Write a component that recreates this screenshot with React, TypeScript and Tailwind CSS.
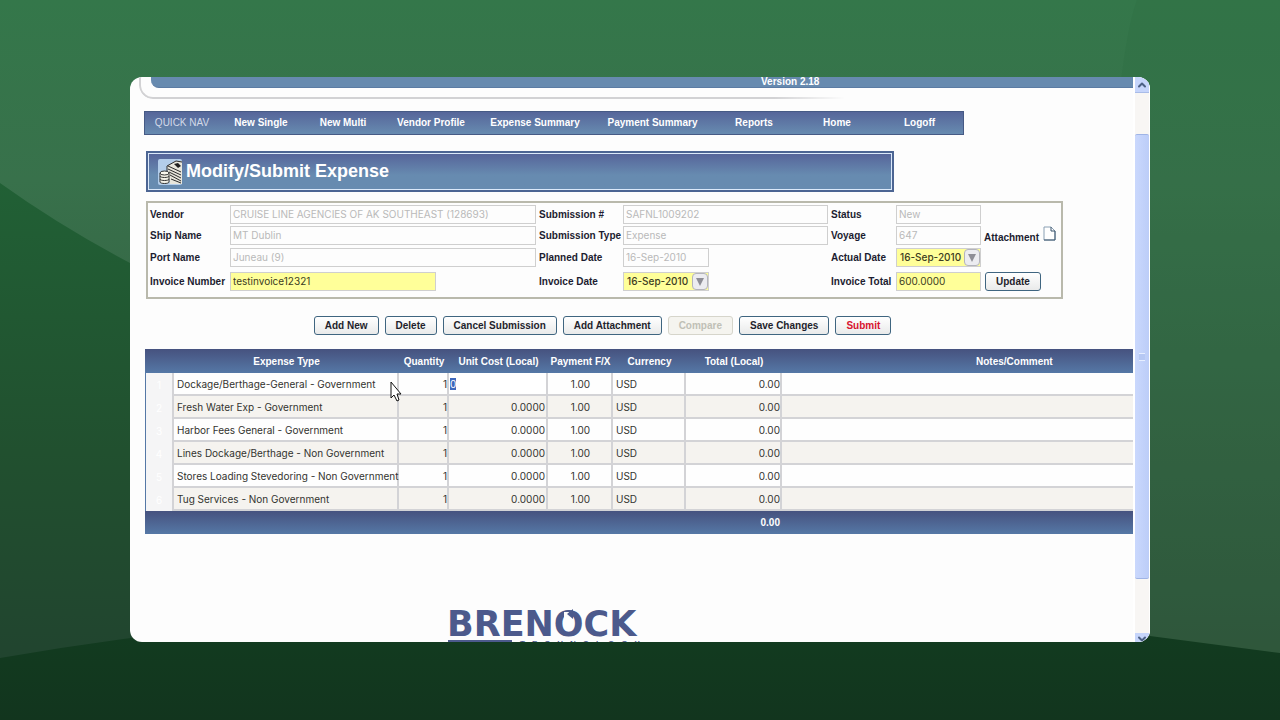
import { useEffect, useRef } from "react";
import { ChevronDown, ChevronUp } from "lucide-react";

const navItems = [
  { label: "New Single", width: "w-[84px]" },
  { label: "New Multi", width: "w-20" },
  { label: "Vendor Profile", width: "w-24" },
  { label: "Expense Summary", width: "w-28" },
  { label: "Payment Summary", width: "w-[123px]" },
  { label: "Reports", width: "w-20" },
  { label: "Home", width: "w-[86px]" },
  { label: "Logoff", width: "w-[79px]" },
];

const expenses = [
  "Dockage/Berthage-General - Government",
  "Fresh Water Exp - Government",
  "Harbor Fees General - Government",
  "Lines Dockage/Berthage - Non Government",
  "Stores Loading Stevedoring - Non Government",
  "Tug Services - Non Government",
];

const actions = ["Add New", "Delete", "Cancel Submission", "Add Attachment", "Compare", "Save Changes", "Submit"];

const bodyFont = "font-['Inter','Liberation_Sans',sans-serif]";

interface FieldProps {
  id: string;
  label: string;
  value: string;
  width?: string;
  kind?: "locked" | "editable" | "date";
}

function Field({ id, label, value, width = "w-full", kind = "locked" }: FieldProps) {
  const locked = kind === "locked";
  return (
    <>
      <label htmlFor={id} className="flex h-[19px] items-center font-bold whitespace-nowrap text-[#1c1c30]">
        {label}
      </label>
      <div
        className={`flex h-[19px] border border-[#cfcfcf] ${width} ${locked ? "bg-[#fdfdfd]" : "bg-[#ffff99]"}`}
      >
        <input
          id={id}
          defaultValue={value}
          disabled={locked}
          className={`w-full min-w-0 bg-transparent pb-[2px] outline-none ${bodyFont} ${
            locked ? "px-[2px] text-[#b9b9b9]" : kind === "date" ? "pl-[3px] font-medium text-[#3c3c22]" : "px-[2px] text-[#3c3c22]"
          }`}
        />
        {kind === "date" && (
          <button
            aria-label={`Pick ${label}`}
            className="flex w-4 shrink-0 items-center justify-center rounded-[4px] border border-[#b4b4bc] bg-[#ececf0]"
          >
            <svg viewBox="0 0 8 8" className="h-2 w-2" fill="#8e8e96">
              <path d="M0 0h8L4 8z" />
            </svg>
          </button>
        )}
      </div>
    </>
  );
}

function ActionButton({ label }: { label: string }) {
  const disabled = label === "Compare";
  return (
    <button
      disabled={disabled}
      className={`h-[19px] rounded-[3px] border px-[10px] font-bold whitespace-nowrap ${
        disabled
          ? "border-[#d6d5cb] bg-[#f5f4ef] text-[#c0c0b6]"
          : "border-[#3f6580] bg-linear-to-b from-white to-[#e9eaea]"
      } ${label === "Submit" ? "text-[#d8122f]" : disabled ? "" : "text-[#1f1f2c]"}`}
    >
      {label}
    </button>
  );
}

function ExpenseIcon() {
  return (
    <svg viewBox="0 0 24 26" className="h-[26px] w-6" fill="none">
      <rect width="24" height="26" rx="2" fill="#b3cdea" />
      <path d="M9 7 18 2h6v23H12z" fill="#e8e6dc" />
      <path d="M9 7 18 2l6 1M10 7l13 6M10 10l13 6M11 13l12 6M12 16l11 6M13 20l10 4M9 7v5" stroke="#2b2b2b" />
      <path d="m16 5 4-1 3 3-3 2z" fill="#1f1f1f" />
      <path d="M2 14v9c0 2 9 2 9 0v-9" fill="#f3f1e6" stroke="#333" />
      <ellipse cx="6.500" cy="14" rx="4.500" ry="2" fill="#faf8ee" stroke="#333" />
      <path d="M2 17c0 2 9 2 9 0M2 20c0 2 9 2 9 0" stroke="#333" />
    </svg>
  );
}

function Backdrop() {
  return (
    <svg
      viewBox="0 0 1280 720"
      preserveAspectRatio="none"
      className="absolute inset-0 -z-10 h-full w-full"
      aria-hidden="true"
    >
      <defs>
        <linearGradient id="base" x1="0" y1="0" x2="0" y2="1">
          <stop offset="0" stopColor="#34774a" />
          <stop offset="0.25" stopColor="#38714b" />
          <stop offset="0.9" stopColor="#30503a" />
        </linearGradient>
        <linearGradient id="hill" x1="0" y1="0" x2="0" y2="1">
          <stop offset="0" stopColor="#216035" />
          <stop offset="0.5" stopColor="#21502f" />
          <stop offset="0.9" stopColor="#21442f" />
        </linearGradient>
        <linearGradient id="floor" x1="0" y1="0" x2="0" y2="1">
          <stop offset="0" stopColor="#123d20" />
          <stop offset="1" stopColor="#12351e" />
        </linearGradient>
      </defs>
      <path d="M0 0h1280v720H0z" fill="url(#base)" />
      <path d="M1137 0h143v720h-180Q1100 100 1137 0z" fill="#2b6b40" fillOpacity="0.25" />
      <path d="M0 183Q60 226 130 263 400 440 640 720H0z" fill="url(#hill)" />
      <path d="M0 658Q500 570 1150 636L1280 653V720H0z" fill="url(#floor)" />
    </svg>
  );
}

function ScrollBar() {
  return (
    <div className="flex w-[17px] shrink-0 flex-col border-r border-l-2 border-white bg-[#f8f6f4]">
      <button aria-label="Scroll up" className="flex h-4 items-center justify-center border-b border-[#a9bce8] bg-[#c6d5fb]">
        <ChevronUp className="h-3 w-3 text-[#4d6185]" strokeWidth={4} />
      </button>
      <div className="flex-[41]" />
      <div className="flex flex-[447] items-center justify-center rounded-[2px] border-y border-[#9fb4e6] bg-linear-to-r from-[#cad8fd] to-[#bccdf8]">
        <span className="h-2 w-[6px] border-y border-[#e6eeff] bg-[#b6c8f4]" />
      </div>
      <div className="flex-[54]" />
      <button aria-label="Scroll down" className="flex h-[9px] items-start justify-center overflow-hidden bg-[#c6d5fb]">
        <ChevronDown className="h-3 w-3 shrink-0 text-[#4d6185]" strokeWidth={4} />
      </button>
    </div>
  );
}

function ExpenseTable() {
  const unitCost = useRef<HTMLInputElement>(null);

  useEffect(() => {
    unitCost.current?.focus();
    unitCost.current?.select();
  }, []);

  const cell = "border-r-2 border-b-2 border-[#d3d3d6]";

  return (
    <table className="mt-[14px] ml-[15px] w-[calc(100%-15px)] table-fixed border-separate border-spacing-0 whitespace-nowrap">
      <colgroup>
        <col className="w-[29px]" />
        <col className="w-[225px]" />
        <col className="w-[50px]" />
        <col className="w-[99px]" />
        <col className="w-[65px]" />
        <col className="w-[73px]" />
        <col className="w-24" />
        <col />
      </colgroup>
      <thead>
        <tr className="h-6 bg-linear-to-b from-[#46527f] to-[#5578a6] text-white">
          <th />
          <th className="pt-px">Expense Type</th>
          <th className="pt-px">Quantity</th>
          <th className="pt-px">Unit Cost (Local)</th>
          <th className="pt-px">Payment F/X</th>
          <th className="pt-px">Currency</th>
          <th className="pt-px">Total (Local)</th>
          <th className="pt-px pl-[194px] text-left">Notes/Comment</th>
        </tr>
      </thead>
      <tbody className={`${bodyFont} text-[#33332f]`}>
        {expenses.map((name, i) => (
          <tr key={name} className="h-[23px] bg-[#fefefe] even:bg-[#f5f3ef]">
            <td className="border-r-2 border-l border-r-[#d3d3d6] border-l-[#5578a6] bg-[#f5f5f6] text-center text-white">
              {i + 1}
            </td>
            <td className={`${cell} pl-[3px]`}>{name}</td>
            <td className={`${cell} text-right`}>1</td>
            <td className={`${cell} text-right`}>
              {i === 0 ? (
                <input
                  ref={unitCost}
                  aria-label="Unit Cost (Local)"
                  defaultValue="0"
                  className="block h-[21px] w-full bg-white px-px outline-none selection:bg-[#3f68bb] selection:text-white"
                />
              ) : (
                <span className="pr-px">0.0000</span>
              )}
            </td>
            <td className={`${cell} pl-[2px] text-center`}>1.00</td>
            <td className={`${cell} pl-[3px]`}>USD</td>
            <td className={`${cell} text-right`}>0.00</td>
            <td className="border-b-2 border-[#d3d3d6]" />
          </tr>
        ))}
      </tbody>
      <tfoot>
        <tr className="h-[23px] bg-linear-to-b from-[#46527f] to-[#5578a6] font-bold text-white">
          <td colSpan={6} />
          <td className="pr-[2px] text-right">0.00</td>
          <td />
        </tr>
      </tfoot>
    </table>
  );
}

export default function App() {
  return (
    <div className="relative isolate flex h-screen px-[130px] pt-[77px] pb-[78px] font-['Liberation_Sans',Arial,sans-serif] text-[10px]/[14px]">
      <Backdrop />

      <div className="flex min-w-0 flex-1 overflow-hidden rounded-[12px] bg-[#fdfdfd]">
        <main className="min-w-0 flex-1 overflow-hidden">
          {/* Banner */}
          <header className="ml-[9px] grid">
            <div className="col-start-1 row-start-1 h-[22px] w-[706px] rounded-bl-[14px] border-b-2 border-l-2 border-[#d2d2d4] mask-r-from-90%" />
            <div className="col-start-1 row-start-1 ml-3 h-[11px] rounded-bl-[8px] border-b border-[#5b7ba3] bg-[#678aaf] pl-[610px] text-[10px]/[9px] font-bold text-white">
              Version 2.18
            </div>
          </header>

          {/* Quick nav */}
          <nav className="mt-3 ml-[14px] flex h-6 w-[820px] items-center border border-[#465a85] bg-linear-to-b from-[#56669a] to-[#678bb0] pr-[2px] text-center whitespace-nowrap text-white">
            <span className="w-[74px] text-[#d3dae8]">QUICK NAV</span>
            {navItems.map((item) => (
              <a key={item.label} href="#" className={`font-bold ${item.width}`}>
                {item.label}
              </a>
            ))}
          </nav>

          {/* Page title */}
          <div className="mt-4 ml-4 w-[748px] border-2 border-[#4c6593] bg-[#dbe9fa] p-px">
            <div className="flex h-[35px] items-center gap-1 bg-linear-to-b from-[#56659a] to-[#678bb0] to-60% pl-[9px]">
              <ExpenseIcon />
              <h1 className="pb-px text-lg font-bold text-white">Modify/Submit Expense</h1>
            </div>
          </div>

          {/* Submission details */}
          <form className="mt-[9px] ml-4 grid w-[917px] grid-cols-[77px_306px_81px_205px_62px_85px_1fr] grid-rows-[19px_20px_22px_19px] items-start gap-x-[3px] gap-y-[2px] border-2 border-[#b9b9ac] px-[2px] pt-[2px] pb-[6px]">
            <Field id="vendor" label="Vendor" value="CRUISE LINE AGENCIES OF AK SOUTHEAST (128693)" />
            <Field id="submission" label="Submission #" value="SAFNL1009202" />
            <Field id="status" label="Status" value="New" />
            <span />

            <Field id="ship" label="Ship Name" value="MT Dublin" />
            <Field id="type" label="Submission Type" value="Expense" />
            <Field id="voyage" label="Voyage" value="647" />
            <div className="flex items-end gap-1 font-bold text-[#1c1c30]">
              <span className="-mb-1">Attachment</span>
              <svg viewBox="0 0 13 15" className="h-[15px] w-[13px]" fill="#fff">
                <path d="M1 1h7l4 4v9H1z" stroke="#8aa0b4" />
                <path d="M8 1v4h4v9H1" stroke="#3b546c" fill="none" />
              </svg>
            </div>

            <Field id="port" label="Port Name" value="Juneau (9)" />
            <Field id="planned" label="Planned Date" value="16-Sep-2010" width="w-[86px]" />
            <Field id="actual" label="Actual Date" value="16-Sep-2010" kind="date" />
            <span />

            <Field id="invoice" label="Invoice Number" value="testinvoice12321" width="w-[206px]" kind="editable" />
            <Field id="invoice-date" label="Invoice Date" value="16-Sep-2010" width="w-[86px]" kind="date" />
            <Field id="total" label="Invoice Total" value="600.0000" kind="editable" />
            <div className="flex pl-px">
              <ActionButton label="Update" />
            </div>
          </form>

          <div className="mt-[17px] ml-4 flex w-[913px] justify-center gap-[6px]">
            {actions.map((label) => (
              <ActionButton key={label} label={label} />
            ))}
          </div>

          <ExpenseTable />

          {/* Company logo */}
          <footer className="mt-[76px] ml-[317px] w-[193px] text-[#4c5a8c]">
            <p className="font-['DejaVu_Sans',sans-serif] text-[35px]/[28px] font-bold">
              BREN
              <span className="relative">
                O
                <svg viewBox="0 0 12 12" className="absolute top-[5px] left-[10px] h-3 w-3" aria-hidden="true">
                  <path d="M0 3h5v9H0z" fill="#fdfdfd" />
                  <path d="M3 5 9 0v10z" fill="#4c5a8c" />
                </svg>
              </span>
              CK
            </p>
            <div className="mt-[2px] flex items-start gap-2 pl-px">
              <span className="h-[3px] w-16 bg-[#4c5a8c]" />
              <span className="flex flex-1 justify-between text-[8px]/[8px] font-bold">
                {[..."TECHNOLOGY"].map((letter, i) => (
                  <span key={i}>{letter}</span>
                ))}
              </span>
            </div>
          </footer>
        </main>

        <ScrollBar />
      </div>

      {/* Mouse pointer */}
      <svg viewBox="0 0 12 21" className="absolute top-[381px] left-[390px] h-[21px] w-3" aria-hidden="true">
        <path d="M1 1v16l3-3 3 6 2-1-2-6h4z" fill="#fff" stroke="#111" />
      </svg>
    </div>
  );
}
